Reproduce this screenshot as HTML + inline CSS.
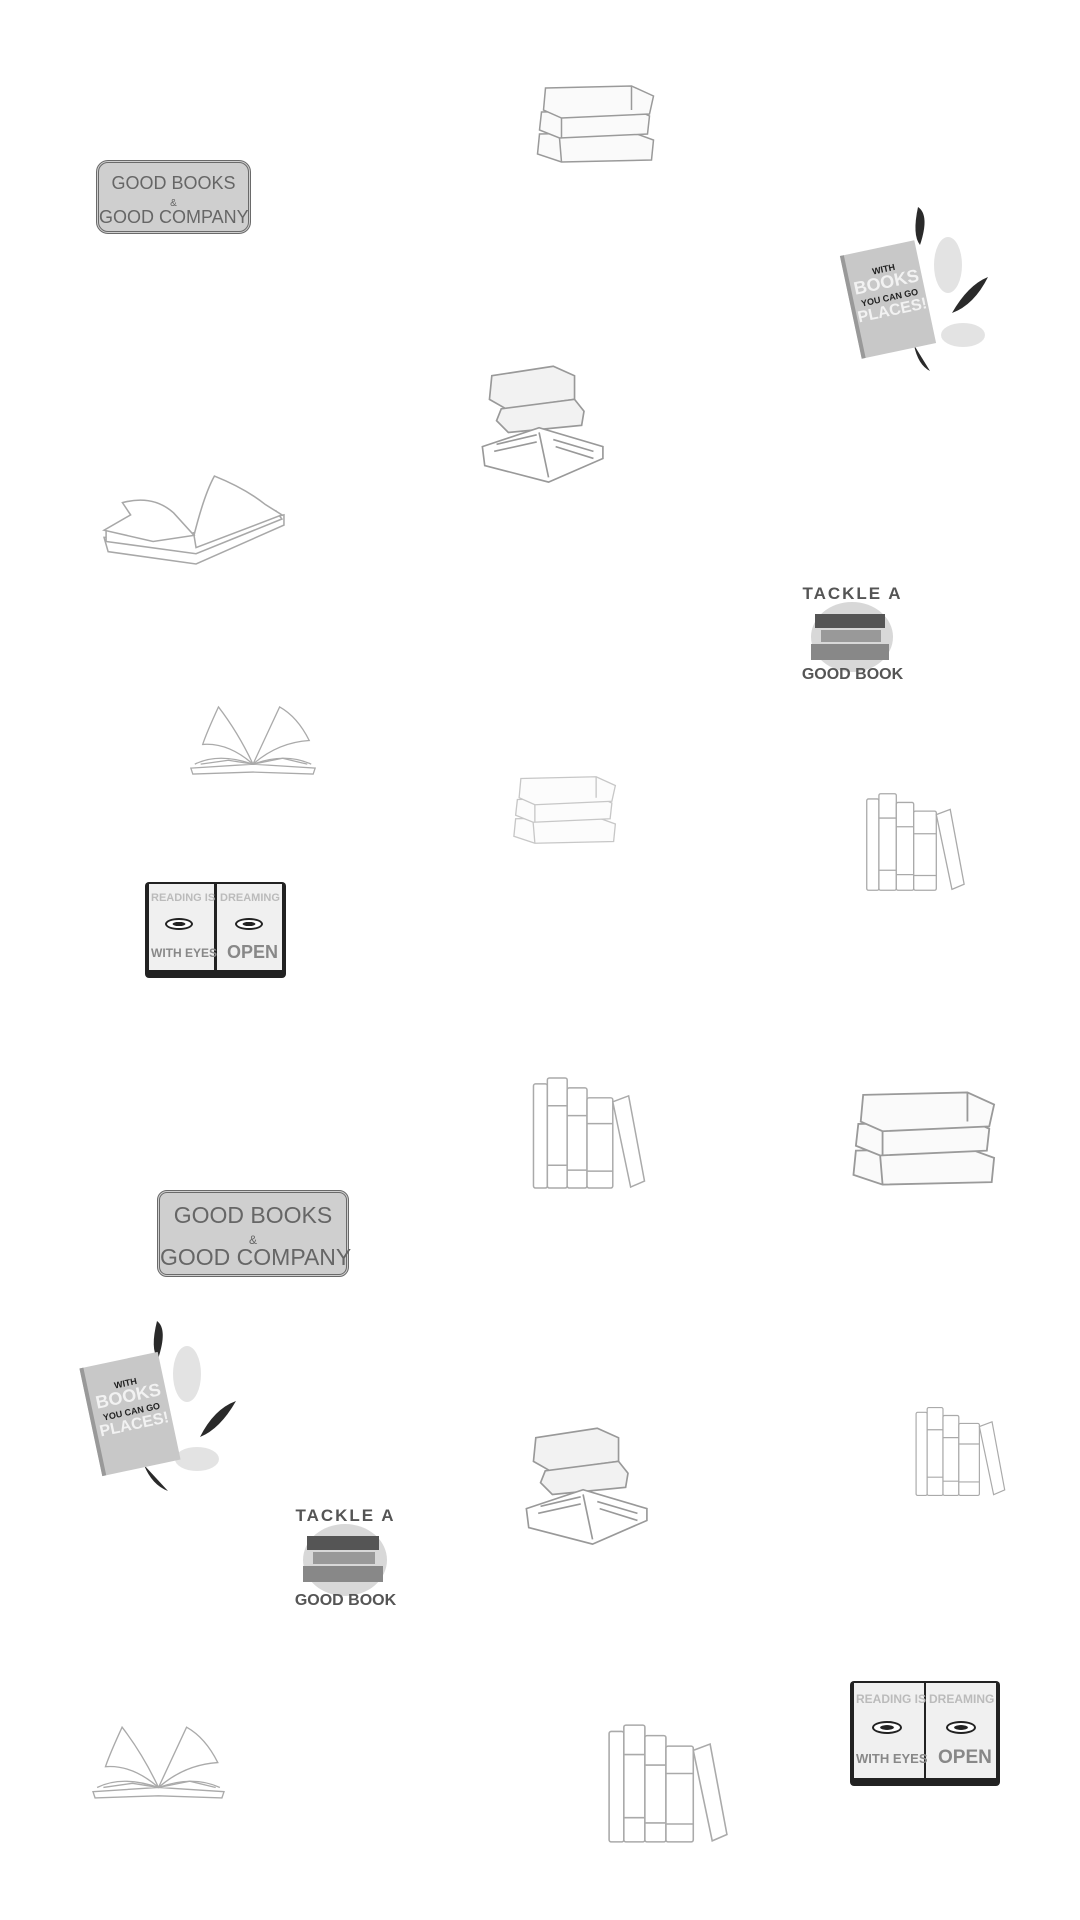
<!DOCTYPE html>
<html><head><meta charset="utf-8"><style>
html,body{margin:0;padding:0;background:#fff;}
body{width:1080px;height:1920px;position:relative;overflow:hidden;font-family:"Liberation Sans",sans-serif;}
.a{position:absolute;}
svg{display:block;overflow:visible}
.sign{white-space:nowrap;font-family:"Liberation Sans Narrow","Liberation Sans",sans-serif;}
</style></head><body>
<svg width="0" height="0" style="position:absolute">
<defs>
<symbol id="stack" viewBox="0 0 130 80">
<g fill="#fafafa" stroke="#9a9a9a" stroke-width="1.5">
<path d="M8 50 L100 48 L122 56 L120 76 L30 78 L6 70 Z"/>
<path d="M10 28 L105 26 L118 32 L116 50 L28 54 L8 46 Z"/>
<path d="M14 4 L100 2 L122 12 L118 30 L30 34 L12 26 Z"/>
<path d="M30 34 L30 54 M28 54 L30 78 M100 2 L100 26"/>
</g></symbol>
<symbol id="openbook" viewBox="0 0 180 90">
<g fill="#fff" stroke="#a8a8a8" stroke-width="1.5">
<path d="M2 62 L90 60 L178 40 L178 50 L92 88 L6 76 Z"/>
<path d="M4 55 L88 58 L170 36 L176 44 L92 78 L4 66 Z"/>
<path d="M90 60 Q100 20 110 2 Q140 14 160 30 L176 40 L92 72 Z"/>
<path d="M20 28 Q50 20 70 38 L90 60 L50 66 L2 55 L28 40 Z"/>
</g></symbol>
<symbol id="open2" viewBox="0 0 130 75">
<g fill="#fff" stroke="#aaa" stroke-width="1.3">
<path d="M2 66 L65 62 L128 66 L126 72 L65 70 L4 72 Z"/>
<path d="M6 62 Q30 50 65 62 Q98 50 124 62"/>
<path d="M65 62 Q50 30 30 4 Q18 30 14 42 Q40 40 65 62"/>
<path d="M65 62 Q80 30 92 4 Q110 14 122 38 Q90 40 65 62"/>
<path d="M65 62 L40 58 L12 62 M65 62 L95 56 L120 62"/>
</g></symbol>
<symbol id="stand" viewBox="0 0 115 115">
<g fill="#fff" stroke="#aaa" stroke-width="1.5">
<rect x="2" y="8" width="14" height="105" rx="2"/>
<rect x="16" y="2" width="20" height="111" rx="2"/>
<rect x="36" y="12" width="20" height="101" rx="2"/>
<rect x="56" y="22" width="26" height="91" rx="2"/>
<path d="M82 26 L98 20 L114 106 L100 112 Z"/>
<path d="M16 30 H36 M16 90 H36 M36 40 H56 M36 95 H56 M56 48 H82 M56 96 H82"/>
</g></symbol>
<symbol id="stack3" viewBox="0 0 110 100">
<g stroke="#999" stroke-width="1.4" fill="#fff">
<path d="M10 10 L62 2 L80 10 L80 30 L22 38 L8 30 Z" fill="#f2f2f2"/>
<path d="M18 38 L80 30 L88 40 L86 52 L24 58 L14 48 Z" fill="#f2f2f2"/>
<path d="M2 70 L50 54 L104 70 L104 80 L58 100 L4 86 Z"/>
<path d="M50 58 L58 96 M14 68 L48 60 M62 64 L96 74 M12 74 L48 66 M64 70 L96 80"/>
</g></symbol>
</defs></svg>

<svg class="a" style="left:530px;top:84px" width="133" height="80"><use href="#stack"/></svg>
<svg class="a" style="left:480px;top:775px;opacity:.55" width="171" height="70"><use href="#stack"/></svg>
<svg class="a" style="left:840px;top:1090px" width="170" height="97"><use href="#stack"/></svg>
<svg class="a" style="left:480px;top:362px" width="130" height="122"><use href="#stack3"/></svg>
<svg class="a" style="left:524px;top:1424px" width="130" height="122"><use href="#stack3"/></svg>
<svg class="a" style="left:102px;top:474px" width="184" height="92"><use href="#openbook"/></svg>
<svg class="a" style="left:187px;top:703px" width="132" height="74"><use href="#open2"/></svg>
<svg class="a" style="left:90px;top:1723px" width="137" height="78"><use href="#open2"/></svg>
<svg class="a" style="left:858px;top:792px" width="114" height="100"><use href="#stand"/></svg>
<svg class="a" style="left:530px;top:1076px" width="117" height="114"><use href="#stand"/></svg>
<svg class="a" style="left:910px;top:1406px" width="100" height="91"><use href="#stand"/></svg>
<svg class="a" style="left:606px;top:1723px" width="123" height="121"><use href="#stand"/></svg>

<div class="a sign" style="left:96px;top:160px;width:155px;height:74px;background:#cfcfcf;border:3px double #6a6a6a;border-radius:12px;box-sizing:border-box;text-align:center;color:#666;font-size:18px;line-height:17px;padding-top:12px">GOOD BOOKS<br><span style="font-size:10px;line-height:8px">&amp;</span><br>GOOD COMPANY</div>
<div class="a sign" style="left:157px;top:1190px;width:192px;height:87px;background:#cfcfcf;border:3px double #6a6a6a;border-radius:10px;box-sizing:border-box;text-align:center;color:#666;font-size:23px;line-height:21px;padding-top:12px">GOOD BOOKS<br><span style="font-size:12px;line-height:10px">&amp;</span><br>GOOD COMPANY</div>

<div class="a" style="left:838px;top:205px;width:160px;height:170px">
<svg width="160" height="170" style="position:absolute"><g fill="#2a2a2a"><path d="M80 2 Q92 10 82 40 Q74 30 80 2Z"/><path d="M150 72 Q130 80 114 108 Q136 100 150 72Z"/><path d="M76 140 L92 166 Q80 160 76 140Z"/></g><g fill="#e3e3e3"><ellipse cx="110" cy="60" rx="14" ry="28"/><ellipse cx="125" cy="130" rx="22" ry="12"/></g></svg>
<div style="position:absolute;left:12px;top:42px;width:76px;height:105px;background:#c8c8c8;border-left:4px solid #999;transform:rotate(-12deg);text-align:center;font-weight:bold;font-size:9px;color:#222;padding-top:16px;box-sizing:border-box;line-height:13px">WITH<br><span style="color:#f2f2f2;font-size:18px">BOOKS</span><br>YOU CAN GO<br><span style="color:#f2f2f2;font-size:16px">PLACES!</span></div></div>
<div class="a" style="left:82px;top:1319px;width:160px;height:175px">
<svg width="160" height="175" style="position:absolute"><g fill="#2a2a2a"><path d="M75 2 Q86 10 76 40 Q68 30 75 2Z"/><path d="M154 82 Q132 90 118 118 Q138 110 154 82Z"/><path d="M62 146 L86 172 Q70 166 62 146Z"/></g><g fill="#e3e3e3"><ellipse cx="105" cy="55" rx="14" ry="28"/><ellipse cx="115" cy="140" rx="22" ry="12"/></g></svg>
<div style="position:absolute;left:8px;top:40px;width:80px;height:110px;background:#c8c8c8;border-left:4px solid #999;transform:rotate(-12deg);text-align:center;font-weight:bold;font-size:9px;color:#222;padding-top:18px;box-sizing:border-box;line-height:13px">WITH<br><span style="color:#f2f2f2;font-size:18px">BOOKS</span><br>YOU CAN GO<br><span style="color:#f2f2f2;font-size:16px">PLACES!</span></div></div>

<div class="a" style="left:789px;top:584px;width:127px;height:105px">
<div style="position:absolute;left:22px;top:18px;width:82px;height:70px;border-radius:50%;background:#d8d8d8"></div>
<div style="position:absolute;left:26px;top:30px;width:70px;height:14px;background:#555"></div>
<div style="position:absolute;left:32px;top:46px;width:60px;height:12px;background:#999"></div>
<div style="position:absolute;left:22px;top:60px;width:78px;height:16px;background:#888"></div>
<div style="position:absolute;left:0;top:0;width:127px;text-align:center;font-weight:bold;font-size:17px;color:#555;letter-spacing:2px">TACKLE A</div>
<div style="position:absolute;left:0;top:82px;width:127px;text-align:center;font-weight:bold;font-size:16px;color:#555">GOOD BOOK</div></div>
<div class="a" style="left:281px;top:1506px;width:129px;height:109px">
<div style="position:absolute;left:22px;top:18px;width:84px;height:72px;border-radius:50%;background:#d8d8d8"></div>
<div style="position:absolute;left:26px;top:30px;width:72px;height:14px;background:#555"></div>
<div style="position:absolute;left:32px;top:46px;width:62px;height:12px;background:#999"></div>
<div style="position:absolute;left:22px;top:60px;width:80px;height:16px;background:#888"></div>
<div style="position:absolute;left:0;top:0;width:129px;text-align:center;font-weight:bold;font-size:17px;color:#555;letter-spacing:2px">TACKLE A</div>
<div style="position:absolute;left:0;top:86px;width:129px;text-align:center;font-weight:bold;font-size:16px;color:#555">GOOD BOOK</div></div>

<div class="a" style="left:145px;top:882px;width:141px;height:96px;background:#222;border-radius:4px">
<div style="position:absolute;left:4px;top:2px;width:65px;height:86px;background:#f0f0f0"></div>
<div style="position:absolute;left:72px;top:2px;width:65px;height:86px;background:#f0f0f0"></div>
<div style="position:absolute;left:6px;top:10px;font-size:11px;font-weight:bold;color:#bbb">READING IS</div>
<div style="position:absolute;left:75px;top:10px;font-size:11px;font-weight:bold;color:#bbb">DREAMING</div>
<div style="position:absolute;left:20px;top:36px;width:28px;height:12px;border-radius:50%;border:2px solid #222;box-sizing:border-box;background:radial-gradient(#222 35%,#fff 40%)"></div>
<div style="position:absolute;left:90px;top:36px;width:28px;height:12px;border-radius:50%;border:2px solid #222;box-sizing:border-box;background:radial-gradient(#222 35%,#fff 40%)"></div>
<div style="position:absolute;left:6px;top:64px;font-size:12px;font-weight:bold;color:#888">WITH EYES</div>
<div style="position:absolute;left:82px;top:60px;font-size:18px;font-weight:bold;color:#888">OPEN</div></div>
<div class="a" style="left:850px;top:1681px;width:150px;height:105px;background:#222;border-radius:4px">
<div style="position:absolute;left:4px;top:2px;width:70px;height:95px;background:#f0f0f0"></div>
<div style="position:absolute;left:76px;top:2px;width:70px;height:95px;background:#f0f0f0"></div>
<div style="position:absolute;left:6px;top:11px;font-size:12px;font-weight:bold;color:#bbb">READING IS</div>
<div style="position:absolute;left:79px;top:11px;font-size:12px;font-weight:bold;color:#bbb">DREAMING</div>
<div style="position:absolute;left:22px;top:40px;width:30px;height:13px;border-radius:50%;border:2px solid #222;box-sizing:border-box;background:radial-gradient(#222 35%,#fff 40%)"></div>
<div style="position:absolute;left:96px;top:40px;width:30px;height:13px;border-radius:50%;border:2px solid #222;box-sizing:border-box;background:radial-gradient(#222 35%,#fff 40%)"></div>
<div style="position:absolute;left:6px;top:70px;font-size:13px;font-weight:bold;color:#888">WITH EYES</div>
<div style="position:absolute;left:88px;top:66px;font-size:19px;font-weight:bold;color:#888">OPEN</div></div>
</body></html>
